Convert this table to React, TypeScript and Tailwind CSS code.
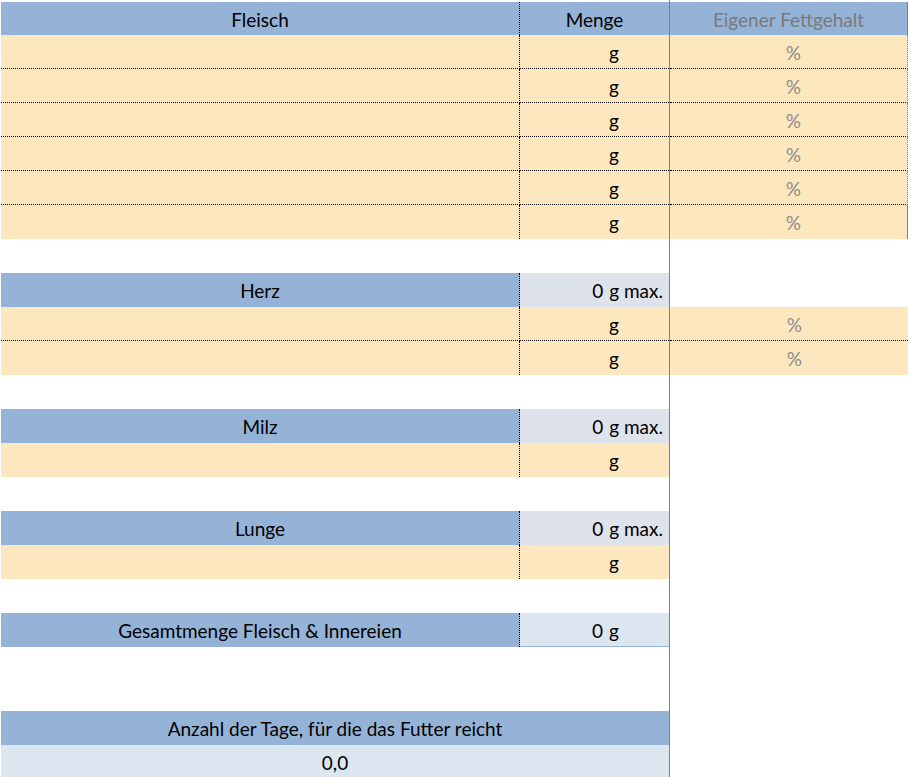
import type { ReactNode } from 'react'
import clsx from 'clsx'

const font = { fontFamily: '"Lato", "Open Sans", sans-serif' }

type RowProps = {
  a?: ReactNode
  b?: ReactNode
  c?: ReactNode
  aClass?: string
  bClass?: string
  cClass?: string
  rowClass?: string
  dotted?: boolean
  edge?: boolean
}

// one spreadsheet row: col A | col B || col C
function Row({ a, b, c, aClass, bClass, cClass, rowClass, dotted, edge }: RowProps) {
  return (
    <div className={clsx('flex h-[34px]', rowClass)}>
      <div className="flex w-[670px] border-r border-[#7f7f7f] pl-px">
        <div
          className={clsx(
            'flex w-[519px] items-center justify-center pt-[3px]',
            aClass,
            dotted && 'border-b border-dotted border-b-black'
          )}
        >
          {a}
        </div>
        <div
          className={clsx(
            'flex flex-1 items-center pt-[3px]',
            bClass,
            dotted && 'border-b border-dotted border-b-black'
          )}
        >
          {b}
        </div>
      </div>
      <div
        className={clsx(
          'flex w-[238px] items-center pt-[3px]',
          cClass,
          dotted && 'border-b border-dotted border-b-black',
          edge && 'border-r border-r-[#7f7f7f]'
        )}
      >
        {c}
      </div>
    </div>
  )
}

const sep = 'border-r border-dotted border-r-black'
const peach = 'bg-[#fde7bf]'

function Spacer({ h = 'h-[34px]' }: { h?: string }) {
  return (
    <div className={clsx('flex', h)}>
      <div className="w-[670px] border-r border-[#7f7f7f]" />
    </div>
  )
}

function Amount({ zero, max }: { zero?: boolean; max?: boolean }) {
  return (
    <span>
      {zero && <span className="mr-[6px]">0</span>}g{max && ' max.'}
    </span>
  )
}

const pct = <span className="text-[#8c8c8c]">%</span>

function InputRow({ withPct, dotted, edge }: { withPct?: boolean; dotted?: boolean; edge?: boolean }) {
  return (
    <Row
      aClass={clsx(peach, sep)}
      b={<Amount />}
      bClass={clsx(peach, 'justify-end pr-[50px]')}
      c={withPct ? pct : null}
      cClass={withPct ? clsx(peach, 'justify-end pr-[106px]') : undefined}
      dotted={dotted}
      edge={edge}
    />
  )
}

function SectionHead({ title }: { title: string }) {
  return (
    <Row
      a={title}
      aClass={clsx('bg-[#95b3d7]', sep)}
      b={<Amount zero max />}
      bClass="bg-[#dee2ea] justify-end pr-[6px]"
    />
  )
}

export default function App() {
  return (
    <div className="min-h-screen w-[908px] overflow-hidden bg-white text-[19px] text-black" style={font}>
      <div className="flex h-[2px]">
        <div className="w-[670px] border-r border-[#7f7f7f]" />
      </div>

      <Row
        rowClass="!h-[33px]"
        a="Fleisch"
        aClass={clsx('bg-[#95b3d7]', sep)}
        b="Menge"
        bClass="bg-[#95b3d7] justify-center"
        c={<span className="text-[#7a7a7a]">Eigener Fettgehalt</span>}
        cClass="bg-[#95b3d7] justify-center"
        edge
      />
      {[0, 1, 2, 3, 4].map((i) => (
        <InputRow key={i} withPct dotted edge />
      ))}
      <InputRow withPct edge />

      <Spacer />
      <SectionHead title="Herz" />
      <InputRow withPct dotted />
      <InputRow withPct />

      <Spacer />
      <SectionHead title="Milz" />
      <InputRow />

      <Spacer />
      <SectionHead title="Lunge" />
      <InputRow />

      <Spacer />
      <Row
        a="Gesamtmenge Fleisch & Innereien"
        aClass={clsx('bg-[#95b3d7]', sep)}
        b={<Amount zero />}
        bClass="bg-[#dce6f1] justify-end pr-[50px] border-b border-b-[#95b3d7]"
      />
      <Spacer h="h-[64px]" />

      <div className="flex h-[34px]">
        <div className="flex w-[670px] border-r border-[#7f7f7f] pl-px">
          <div className="flex flex-1 items-center justify-center bg-[#95b3d7] pt-[3px]">
            Anzahl der Tage, für die das Futter reicht
          </div>
        </div>
      </div>
      <div className="flex h-[34px]">
        <div className="flex w-[670px] border-r border-[#7f7f7f] pl-px">
          <div className="flex flex-1 items-center justify-center bg-[#dce6f1] pt-[3px]">0,0</div>
        </div>
      </div>
    </div>
  )
}
